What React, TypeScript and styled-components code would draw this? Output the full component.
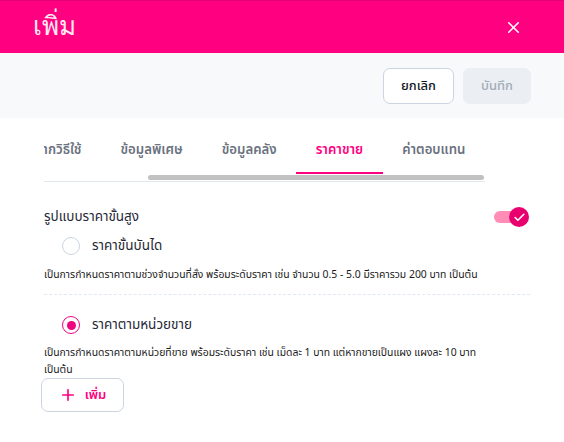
import React, { useLayoutEffect, useRef, useState } from "react";
import styled, { createGlobalStyle } from "styled-components";
import { X, Plus, Check } from "lucide-react";

const Global = createGlobalStyle`
  html, body { margin: 0; padding: 0; background: #ffffff; }
  body { font-family: "Noto Sans", "Noto Sans Thai", "Liberation Sans", sans-serif; color: #1f2937; }
  * { box-sizing: border-box; }
`;

const Page = styled.div`
  width: 564px;
  height: 442px;
  display: flex;
  flex-direction: column;
  background: #ffffff;
  overflow: hidden;
`;

const Header = styled.header`
  height: 53px;
  flex: none;
  background: #ff0080;
  border-top: 1px solid #e60073;
  display: flex;
  align-items: center;
  justify-content: space-between;
  padding: 0 41px 0 33px;
`;

const Title = styled.h1`
  margin: 0;
  font-family: "Liberation Serif", serif;
  font-weight: 400;
  font-size: 26px;
  color: #ffeaf4;
  line-height: 1;
`;

const CloseButton = styled.button`
  border: 0;
  background: transparent;
  padding: 0;
  color: #ffffff;
  display: flex;
  cursor: pointer;
`;

const ActionBar = styled.div`
  height: 65px;
  flex: none;
  background: #f7f9fb;
  display: flex;
  align-items: center;
  justify-content: flex-end;
  gap: 9px;
  padding: 1px 33px 0 0;
`;

const ActionButton = styled.button<{ $variant: "outline" | "disabled" }>`
  height: 36px;
  width: ${(p) => (p.$variant === "outline" ? "71px" : "68px")};
  padding: 0;
  border-radius: 7px;
  font-family: inherit;
  font-size: 13px;
  font-weight: 500;
  border: 1px solid ${(p) => (p.$variant === "outline" ? "#cbd5e1" : "#ebeef2")};
  background: ${(p) => (p.$variant === "outline" ? "#ffffff" : "#ebeef2")};
  color: ${(p) => (p.$variant === "outline" ? "#111827" : "#a3acb9")};
`;

const Body = styled.div`
  padding: 10px 33px 0 44px;
  display: flex;
  flex-direction: column;
`;

const TabsFrame = styled.div`
  width: 441px;
  border-bottom: 1px solid #e2e8f0;
`;

const TabScroller = styled.div`
  overflow-x: auto;
  scrollbar-width: none;
  &::-webkit-scrollbar { display: none; }
`;

const TabList = styled.div`
  display: flex;
  width: max-content;
`;

const Tab = styled.div<{ $active?: boolean }>`
  flex: none;
  height: 46px;
  padding: 0 19.5px;
  display: flex;
  align-items: center;
  font-size: 13.2px;
  font-weight: 600;
  white-space: nowrap;
  color: ${(p) => (p.$active ? "#ff0080" : "#6b7280")};
  border-bottom: 2px solid ${(p) => (p.$active ? "#ff0080" : "transparent")};
`;

const ScrollTrack = styled.div`
  position: relative;
  height: 7px;
`;

const ScrollThumb = styled.div`
  position: absolute;
  top: 1px;
  height: 5px;
  border-radius: 3px;
  background: #c1c1c1;
`;

const SettingRow = styled.div`
  margin-top: 24px;
  display: flex;
  align-items: center;
  justify-content: space-between;
  height: 22px;
  font-size: 13.5px;
  color: #1f2937;
`;

const Toggle = styled.div`
  position: relative;
  width: 35px;
  height: 20px;
  display: flex;
  align-items: center;
  margin-right: 2px;
`;

const ToggleTrack = styled.div`
  width: 25px;
  height: 12px;
  border-radius: 6px;
  background: #ff8db6;
`;

const ToggleKnob = styled.div`
  position: absolute;
  right: 0;
  top: 0;
  width: 20px;
  height: 20px;
  border-radius: 50%;
  background: #e8006f;
  color: #ffffff;
  display: flex;
  align-items: center;
  justify-content: center;
`;

const Option = styled.label<{ $first?: boolean }>`
  display: flex;
  align-items: center;
  gap: 12px;
  margin: ${(p) => (p.$first ? "7px" : "19px")} 0 0 18px;
  height: 22px;
  font-size: 13.5px;
  color: #1f2937;
`;

const Radio = styled.span<{ $checked?: boolean }>`
  width: 18px;
  height: 18px;
  border-radius: 50%;
  border: 1.5px solid ${(p) => (p.$checked ? "#f0047f" : "#cbd5e1")};
  display: flex;
  align-items: center;
  justify-content: center;
  &::after {
    content: "";
    width: 9px;
    height: 9px;
    border-radius: 50%;
    background: ${(p) => (p.$checked ? "#f0047f" : "transparent")};
  }
`;

const Description = styled.p<{ $gap: number }>`
  margin: ${(p) => p.$gap}px 0 0 0;
  max-width: 441px;
  font-size: 10.4px;
  line-height: 17px;
  color: #1a1a1a;
`;

const Divider = styled.hr`
  margin: 11px 0 0 0;
  border: 0;
  border-top: 1.5px dashed #e2e8f0;
  width: 486px;
`;

const AddButton = styled.button`
  margin: 0 0 0 -3px;
  align-self: flex-start;
  width: 83px;
  height: 34px;
  border: 1px solid #cbd5e1;
  border-radius: 7px;
  background: #ffffff;
  color: #ff0080;
  font-family: inherit;
  font-size: 13px;
  font-weight: 600;
  display: flex;
  align-items: center;
  justify-content: center;
  gap: 8px;
`;

const tabs = ["ข้อมูลทั่วไป", "ฉลากวิธีใช้", "ข้อมูลพิเศษ", "ข้อมูลคลัง", "ราคาขาย", "ค่าตอบแทน"];

export default function App() {
  const ref = useRef<HTMLDivElement>(null);
  const [thumb, setThumb] = useState({ left: 0, width: 0 });
  useLayoutEffect(() => {
    const el = ref.current;
    if (!el) return;
    el.scrollLeft = el.scrollWidth;
    const update = () => {
      const ratio = el.clientWidth / el.scrollWidth;
      setThumb({
        left: el.scrollLeft * ratio + 1,
        width: el.clientWidth * ratio - 2,
      });
    };
    update();
    el.addEventListener("scroll", update);
    return () => el.removeEventListener("scroll", update);
  }, []);
  return (
    <Page>
      <Global />
      <Header>
        <Title>เพิ่ม</Title>
        <CloseButton aria-label="close">
          <X size={19} strokeWidth={2} />
        </CloseButton>
      </Header>
      <ActionBar>
        <ActionButton $variant="outline">ยกเลิก</ActionButton>
        <ActionButton $variant="disabled">บันทึก</ActionButton>
      </ActionBar>
      <Body>
        <TabsFrame>
          <TabScroller ref={ref}>
            <TabList>
              {tabs.map((t) => (
                <Tab key={t} $active={t === "ราคาขาย"}>
                  {t}
                </Tab>
              ))}
            </TabList>
          </TabScroller>
          <ScrollTrack>
            <ScrollThumb style={{ left: thumb.left, width: thumb.width }} />
          </ScrollTrack>
        </TabsFrame>
        <SettingRow>
          <span>รูปแบบราคาขั้นสูง</span>
          <Toggle>
            <ToggleTrack />
            <ToggleKnob>
              <Check size={13} strokeWidth={3} />
            </ToggleKnob>
          </Toggle>
        </SettingRow>
        <Option $first>
          <Radio />
          ราคาขั้นบันได
        </Option>
        <Description $gap={9}>
          เป็นการกำหนดราคาตามช่วงจำนวนที่สั่ง พร้อมระดับราคา เช่น จำนวน 0.5 - 5.0 มีราคารวม 200 บาท เป็นต้น
        </Description>
        <Divider />
        <Option>
          <Radio $checked />
          ราคาตามหน่วยขาย
        </Option>
        <Description $gap={8}>
          เป็นการกำหนดราคาตามหน่วยที่ขาย พร้อมระดับราคา เช่น เม็ดละ 1 บาท แต่หากขายเป็นแผง แผงละ 10 บาท เป็นต้น
        </Description>
        <AddButton>
          <Plus size={18} strokeWidth={2.2} />
          เพิ่ม
        </AddButton>
      </Body>
    </Page>
  );
}
